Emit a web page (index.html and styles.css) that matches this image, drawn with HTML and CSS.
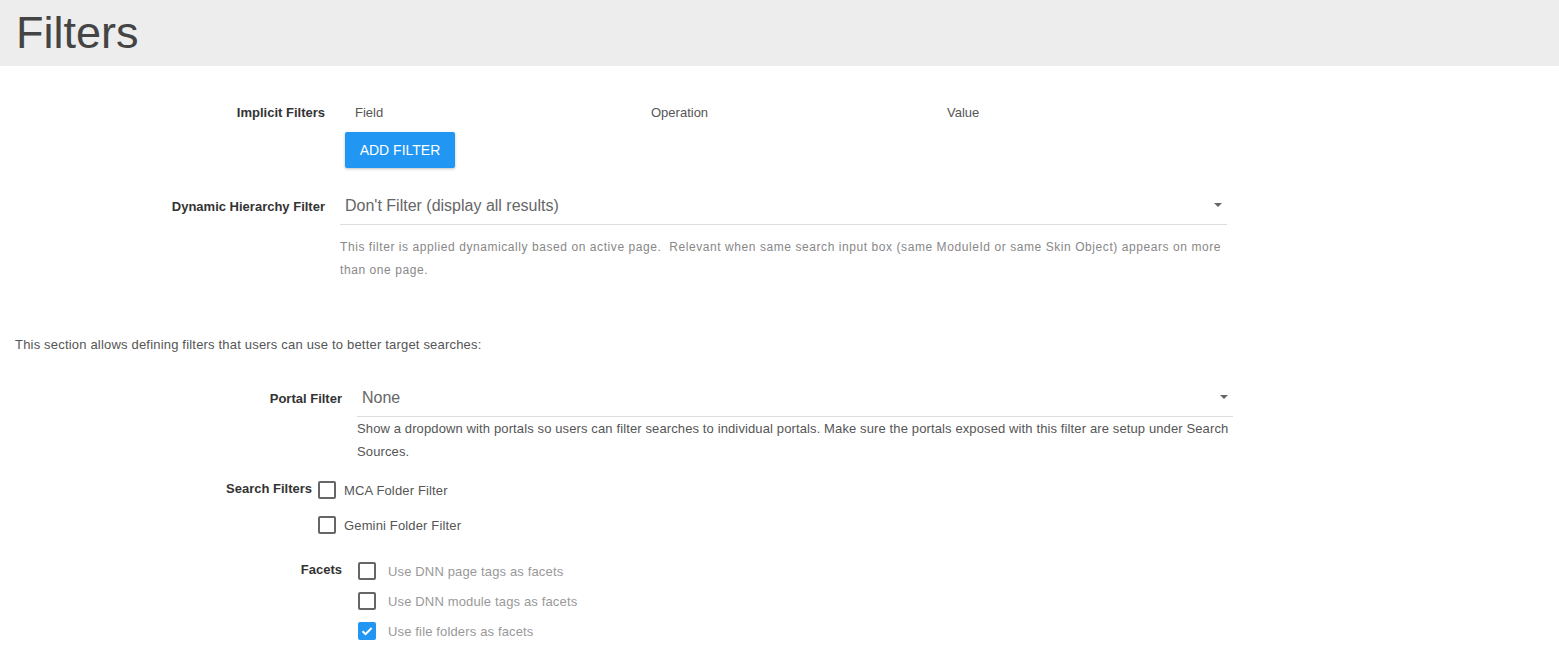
FILE: index.html
```html
<!DOCTYPE html>
<html>
<head>
<meta charset="utf-8">
<link rel="stylesheet" href="styles.css">
</head>
<body>
<header class="page-header"><h1>Filters</h1></header>

<section class="top">
  <div class="row row-implicit">
    <div class="label lbl-top">Implicit Filters</div>
    <div class="content">
      <div class="cols">
        <span class="col">Field</span>
        <span class="col">Operation</span>
        <span class="col">Value</span>
      </div>
      <button class="btn">ADD FILTER</button>
    </div>
  </div>

  <div class="row row-dynamic">
    <div class="label lbl-top">Dynamic Hierarchy Filter</div>
    <div class="content content-dyn">
      <div class="select"><span>Don't Filter (display all results)</span><i class="caret"></i></div>
      <p class="help help-light">This filter is applied dynamically based on active page.&nbsp; Relevant when same search input box (same ModuleId or same Skin Object) appears on more than one page.</p>
    </div>
  </div>
</section>

<p class="intro">This section allows defining filters that users can use to better target searches:</p>

<section class="bottom">
  <div class="row row-portal">
    <div class="label lbl-portal">Portal Filter</div>
    <div class="content content-portal">
      <div class="select"><span>None</span><i class="caret"></i></div>
      <p class="help help-dark">Show a dropdown with portals so users can filter searches to individual portals. Make sure the portals exposed with this filter are setup under Search Sources.</p>
    </div>
  </div>

  <div class="row row-search">
    <div class="label lbl-search">Search Filters</div>
    <div class="checks checks-search">
      <label class="check"><span class="box"></span><span class="ctext">MCA Folder Filter</span></label>
      <label class="check"><span class="box"></span><span class="ctext">Gemini Folder Filter</span></label>
    </div>
  </div>

  <div class="row row-facets">
    <div class="label lbl-portal">Facets</div>
    <div class="checks checks-facets">
      <label class="check"><span class="box"></span><span class="ctext">Use DNN page tags as facets</span></label>
      <label class="check"><span class="box"></span><span class="ctext">Use DNN module tags as facets</span></label>
      <label class="check"><span class="box checked"><svg viewBox="0 0 18 18" width="18" height="18"><path d="M4.5 9.2 L7.6 12.2 L13.6 6" fill="none" stroke="#fff" stroke-width="2"/></svg></span><span class="ctext">Use file folders as facets</span></label>
    </div>
  </div>
</section>
</body>
</html>
```

FILE: styles.css
```css
* { box-sizing: border-box; }
html, body { margin: 0; padding: 0; background: #fff; }
body { font-family: "Liberation Sans", Arial, sans-serif; color: #555; font-size: 13px; }

.page-header { background: #ededed; height: 66px; padding: 0 17px; display: flex; align-items: center; }
.page-header h1 { margin: 0; font-weight: normal; font-size: 45px; color: #444; line-height: 1; position: relative; top: -1px; left: -1px; }

.row { display: flex; align-items: flex-start; }
.label { font-weight: bold; color: #333; font-size: 13px; text-align: right; flex: none; }

.top { padding-top: 39px; }
.lbl-top { width: 325px; line-height: 16px; }

.row-implicit .content { margin-left: 20px; }
.cols { display: flex; line-height: 16px; }
.col { width: 296px; padding-left: 10px; color: #555; }
.btn { margin-top: 11px; background: #2196f3; color: #fff; border: 0; border-radius: 2px; height: 36px; width: 110px; font-family: "Liberation Sans", Arial, sans-serif; font-size: 14px; box-shadow: 0 1px 3px rgba(0,0,0,0.25); padding: 0; }

.row-dynamic { margin-top: 31px; }
.content-dyn { margin-left: 15px; width: 887px; }
.select { position: relative; border-bottom: 1px solid #ddd; height: 27px; font-size: 16px; color: #666; padding-left: 5px; line-height: 16px; margin-top: -1px; }
.caret { position: absolute; right: 5px; top: 5px; width: 0; height: 0; border-left: 4px solid transparent; border-right: 4px solid transparent; border-top: 4px solid #666; }
.help { margin: 11px 0 0; line-height: 23px; }
.help-light { color: #888; font-size: 12px; letter-spacing: 0.57px; }
.help-dark { color: #555; font-size: 13px; letter-spacing: 0.12px; }

.intro { margin: 55px 0 0 15px; font-size: 13px; color: #555; line-height: 16px; letter-spacing: 0.19px; }

.bottom { padding-top: 38px; }
.lbl-portal { width: 342px; line-height: 16px; }
.content-portal { margin-left: 15px; width: 876px; }
.content-portal .help { margin-top: 0; }

.row-search { margin-top: 18px; }
.lbl-search { width: 312px; line-height: 16px; }
.checks { display: flex; flex-direction: column; }
.checks-search { margin-left: 6px; margin-top: 0; gap: 17px; }
.check { display: flex; align-items: center; height: 18px; }
.box { width: 18px; height: 18px; border: 2px solid #666; border-radius: 2px; flex: none; display: block; }
.box.checked { background: #2196f3; border-color: #2196f3; position: relative; }
.box.checked svg { position: absolute; left: -2px; top: -2px; }
.ctext { margin-left: 8px; font-size: 13px; color: #555; letter-spacing: 0.15px; }

.row-facets { margin-top: 28px; }
.checks-facets { margin-left: 16px; margin-top: 0; gap: 12px; }
.checks-facets .ctext { color: #999; margin-left: 12px; }
```
